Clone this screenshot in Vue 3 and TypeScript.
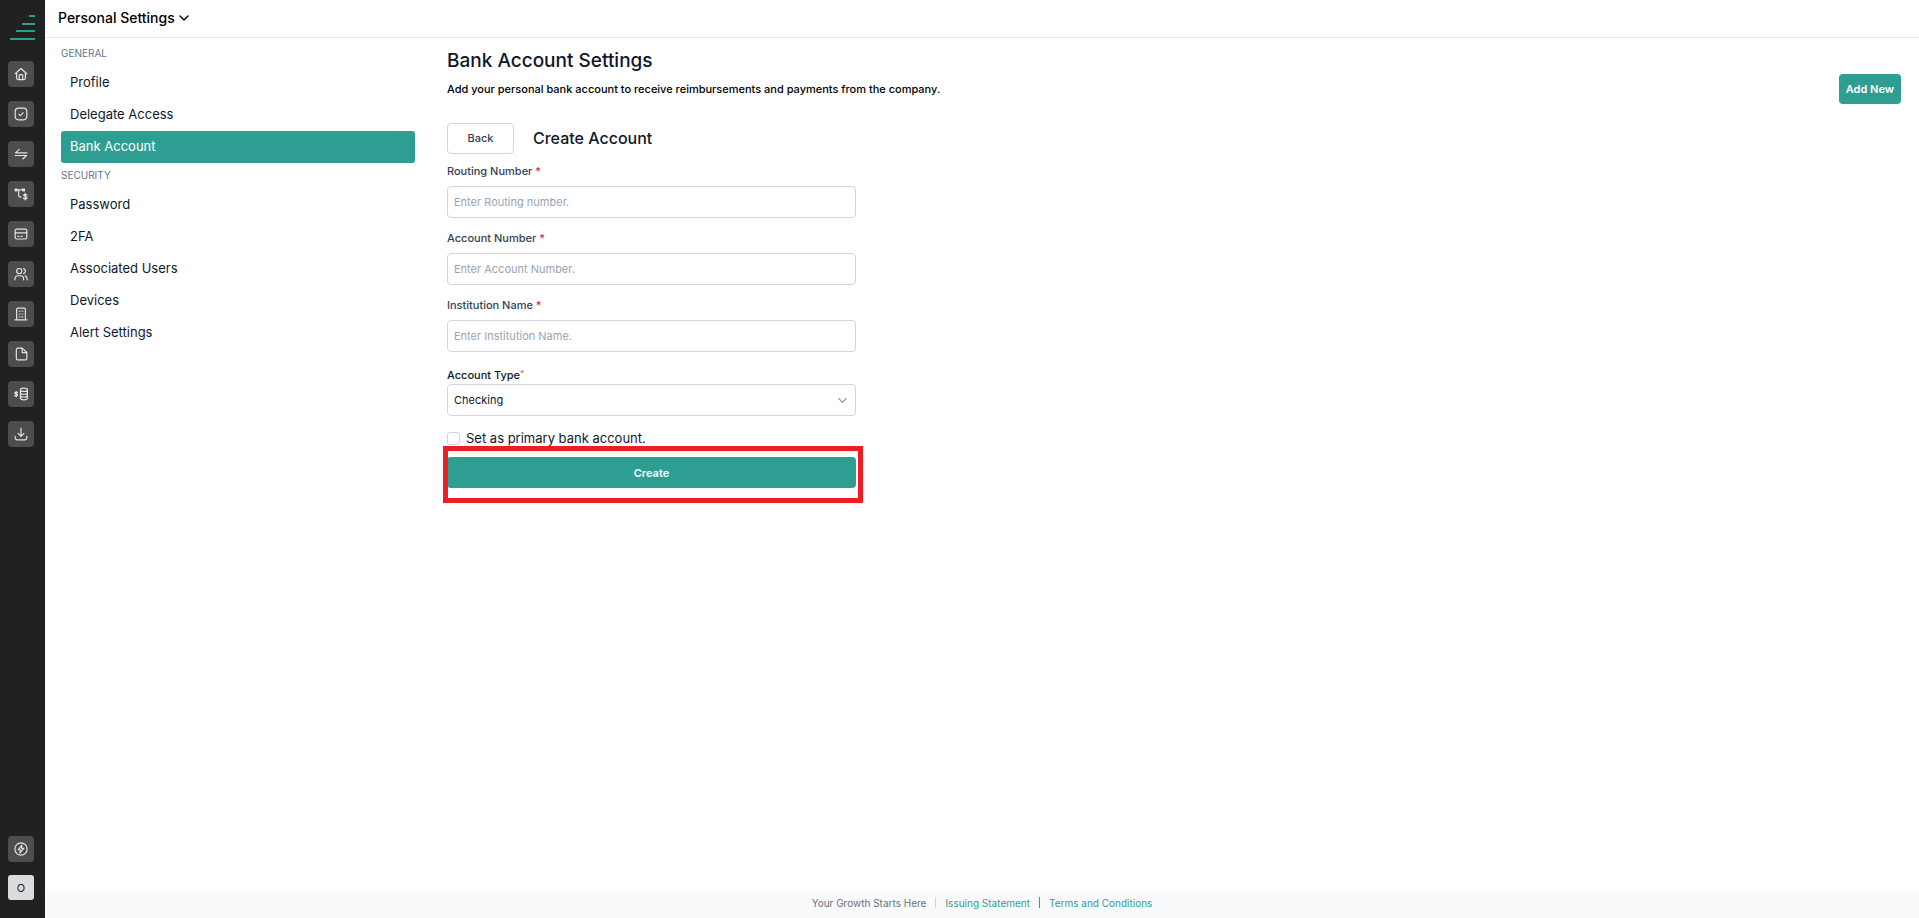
<script setup lang="ts">
import { ref } from 'vue'

interface Shape { d: string; fill?: boolean }
interface RailItem { name: string; shapes: Shape[] }
interface NavSection { title: string; items: string[] }
interface Field { id: string; label: string; placeholder: string }

const rail: RailItem[] = [
  { name: 'Home', shapes: [
    { d: 'M2 11.500 12 2.500l10 9' },
    { d: 'M4.500 9.800V19a2.500 2.500 0 0 0 2.500 2.500h10a2.500 2.500 0 0 0 2.500-2.500V9.800' },
    { d: 'M9 21v-6.500a1.500 1.500 0 0 1 1.500-1.500h3a1.500 1.500 0 0 1 1.500 1.500V21' },
  ] },
  { name: 'Approvals', shapes: [
    { d: 'M8 2h8a6 6 0 0 1 6 6v8a6 6 0 0 1-6 6H8a6 6 0 0 1-6-6V8a6 6 0 0 1 6-6z' },
    { d: 'M8.500 12.500l2.500 2.300 4.700-5' },
  ] },
  { name: 'Transfers', shapes: [
    { d: 'M22 10H2.500l6.500-6' },
    { d: 'M2 14.500h19.500l-6.500 6' },
  ] },
  { name: 'Workflows', shapes: [
    { d: 'M3 5h13M8 5v10a2 2 0 0 0 2 2h2' },
    { d: 'M2 3.500h3v3H2zM15 3.500h3v3h-3z', fill: true },
    { d: 'M22 13.300c-1-1.200-5.500-1.500-5.500 1 0 2.600 6 1.500 6 4 0 2.700-5.300 2.500-6.500.9M19.300 11v11' },
  ] },
  { name: 'Cards', shapes: [
    { d: 'M5 3.500h14a3 3 0 0 1 3 3v11a3 3 0 0 1-3 3H5a3 3 0 0 1-3-3v-11a3 3 0 0 1 3-3z' },
    { d: 'M2 10h20M6.500 16h2M12 16h2' },
  ] },
  { name: 'Users', shapes: [
    { d: 'M9 2.500a4.500 4.500 0 1 1 0 9 4.500 4.500 0 0 1 0-9z' },
    { d: 'M1.500 22v-2a5 5 0 0 1 5-5h5a5 5 0 0 1 5 5v2M16.500 2.800a4.500 4.500 0 0 1 0 8.500M19 15.300a5 5 0 0 1 3.500 4.700v2' },
  ] },
  { name: 'Company', shapes: [
    { d: 'M1.500 22h21M4.500 22V4a2 2 0 0 1 2-2h11a2 2 0 0 1 2 2v18' },
    { d: 'M8.800 7h.4M14.800 7h.4M8.800 12h.4M14.800 12h.4M8.800 17h.4M14.800 17h.4M12 7h.100M12 12h.100M12 17h.100' },
  ] },
  { name: 'Documents', shapes: [
    { d: 'M14 2H6.500A2.500 2.500 0 0 0 4 4.500v15A2.500 2.500 0 0 0 6.500 22h13a2.500 2.500 0 0 0 2.500-2.500V9.500z' },
    { d: 'M14 2v7.500h7.500' },
  ] },
  { name: 'Payments', shapes: [
    { d: 'M6 9.500c-1-1-4.600-1.200-4.600.8 0 2.200 4.800 1.200 4.800 3.400 0 2.200-4 2-5 .6M3.800 7.500v9' },
    { d: 'M11 5c0-4 12-4 12 0v14c0 4-12 4-12 0zM11 5c0 3.500 12 3.500 12 0M11 9.800c0 3.500 12 3.500 12 0M11 14.500c0 3.500 12 3.500 12 0' },
  ] },
  { name: 'Downloads', shapes: [
    { d: 'M12 2v13.500M7 11l5 5 5-5' },
    { d: 'M2 16v2.500A3.500 3.500 0 0 0 5.500 22h13a3.500 3.500 0 0 0 3.500-3.500V16' },
  ] },
]

const sections: NavSection[] = [
  { title: 'GENERAL', items: ['Profile', 'Delegate Access', 'Bank Account'] },
  { title: 'SECURITY', items: ['Password', '2FA', 'Associated Users', 'Devices', 'Alert Settings'] },
]
const active = ref('Bank Account')

const fields: Field[] = [
  { id: 'routing', label: 'Routing Number', placeholder: 'Enter Routing number.' },
  { id: 'account', label: 'Account Number', placeholder: 'Enter Account Number.' },
  { id: 'institution', label: 'Institution Name', placeholder: 'Enter Institution Name.' },
]
const values = ref<Record<string, string>>({ routing: '', account: '', institution: '' })
const accountType = ref('Checking')
const primary = ref(false)
</script>

<template>
  <div class="page">
    <aside class="rail">
      <svg class="logo" viewBox="0 0 25 25" aria-hidden="true">
        <path d="M19 0h6v2h-6zM12 8h13v2H12zM6 15h19v2H6zM0 23h25v2H0z" />
      </svg>
      <nav class="rail-nav" aria-label="Main">
        <a v-for="item in rail" :key="item.name" class="rail-btn" href="#" :aria-label="item.name">
          <svg class="rail-icon" viewBox="0 0 24 24" aria-hidden="true">
            <path v-for="s in item.shapes" :key="s.d" :d="s.d" :class="{ solid: s.fill }" />
          </svg>
        </a>
      </nav>
      <div class="rail-foot">
        <a class="rail-btn" href="#" aria-label="Quick actions">
          <svg class="bolt-icon" viewBox="0 0 24 24" aria-hidden="true">
            <circle cx="12" cy="12" r="10.500" />
            <path d="M13.500 5.500 7 13.300h4l-.8 5.200L17 10.700h-4.200z" />
          </svg>
        </a>
        <button class="avatar" type="button">O</button>
      </div>
    </aside>

    <div class="body">
      <header class="topbar">
        <button class="switcher" type="button">
          Personal Settings
          <svg class="chev" viewBox="0 0 10 10" aria-hidden="true"><path d="M1 3l4 4 4-4" /></svg>
        </button>
      </header>

      <div class="columns">
        <nav class="side" aria-label="Settings">
          <section v-for="s in sections" :key="s.title">
            <h2 class="side-title">{{ s.title }}</h2>
            <a
              v-for="i in s.items" :key="i" href="#" class="side-link"
              :class="{ active: i === active }" @click.prevent="active = i"
            >{{ i }}</a>
          </section>
        </nav>

        <main class="main">
          <div class="head">
            <div class="head-text">
              <h1>Bank Account Settings</h1>
              <p>Add your personal bank account to receive reimbursements and payments from the company.</p>
            </div>
            <button class="primary add" type="button">Add New</button>
          </div>

          <form class="form" @submit.prevent>
            <div class="form-head">
              <button class="back" type="button">Back</button>
              <h2>Create Account</h2>
            </div>

            <div v-for="f in fields" :key="f.id" class="field">
              <label :for="f.id">{{ f.label }} <span class="req">*</span></label>
              <input :id="f.id" v-model="values[f.id]" class="control" type="text" :placeholder="f.placeholder">
            </div>

            <div class="type-field">
              <label for="type">Account Type<span class="req">*</span></label>
              <div class="select-box">
                <select id="type" v-model="accountType" class="control">
                  <option>Checking</option>
                  <option>Savings</option>
                </select>
                <svg class="select-chev" viewBox="0 0 10 10" aria-hidden="true"><path d="M1 3l4 4 4-4" /></svg>
              </div>
            </div>

            <label class="check">
              <input v-model="primary" type="checkbox">
              Set as primary bank account.
            </label>

            <div class="submit">
              <button class="primary create" type="submit">Create</button>
              <span class="highlight" aria-hidden="true"></span>
            </div>
          </form>
        </main>
      </div>

      <footer class="footer">
        <span>Your Growth Starts Here</span>
        <i class="bar"></i>
        <a href="#">Issuing Statement</a>
        <i class="bar teal"></i>
        <a href="#">Terms and Conditions</a>
      </footer>
    </div>
  </div>
</template>

<style>
body { margin: 0; background: #fff; }
</style>

<style scoped>
.page, .page * { box-sizing: border-box; }
.page {
  display: flex;
  min-height: 100vh;
  font: 400 13px/16px "Inter", "Liberation Sans", sans-serif;
  color: #0f172a;
}
h1, h2, p { margin: 0; }
a { text-decoration: none; color: inherit; }
button, input, select { font: inherit; color: inherit; margin: 0; }
button { cursor: pointer; }

.rail {
  flex: none;
  display: flex;
  flex-direction: column;
  width: 45px;
  padding: 15px 0 18px 8px;
  background: #212121;
}
.logo { width: 25px; height: 25px; margin: 0 0 21px 2px; fill: #2f9e92; }
.rail-nav { display: flex; flex-direction: column; gap: 14px; }
.rail-btn {
  display: flex;
  align-items: center;
  justify-content: center;
  width: 26px;
  height: 26px;
  border-radius: 4px;
  background: #4d4d4d;
}
.rail-icon, .bolt-icon {
  width: 14px;
  height: 14px;
  fill: none;
  stroke: #e4e4e4;
  stroke-width: 2;
  stroke-linecap: round;
  stroke-linejoin: round;
}
.rail-icon .solid { fill: #e4e4e4; }
.rail-foot { display: flex; flex-direction: column; gap: 13px; margin-top: auto; }
.avatar {
  width: 26px;
  height: 25px;
  padding: 0;
  border: 0;
  border-radius: 3px;
  background: #dcdcdc;
  color: #222;
  font-size: 11px;
}

.body { flex: 1; min-width: 0; display: flex; flex-direction: column; }
.topbar {
  display: flex;
  align-items: center;
  height: 38px;
  padding: 0 13px 2px;
  border-bottom: 1px solid #e2e8f0;
}
.switcher {
  display: flex;
  align-items: center;
  gap: 4px;
  padding: 0;
  border: 0;
  background: none;
  color: #000;
  font-size: 14px;
  font-weight: 500;
  line-height: 20px;
}
.chev, .select-chev { width: 10px; height: 10px; fill: none; stroke: currentColor; stroke-linecap: round; stroke-linejoin: round; }
.chev { stroke-width: 1.4; }

.columns { flex: 1; display: flex; gap: 32px; padding: 0 18px 0 16px; }
.side { flex: none; width: 354px; padding-top: 3px; }
.side-title { padding-bottom: 2px; font-size: 10px; font-weight: 400; line-height: 24px; color: #64748b; }
.side-link { display: block; padding: 0 9px 2px; line-height: 30px; border-radius: 3px; }
.side-link.active { background: #2f9e92; color: #fff; }

.main { flex: 1; min-width: 0; padding-top: 9px; }
.head { display: flex; justify-content: space-between; align-items: flex-end; }
.head-text { padding-bottom: 7px; }
.head h1 { font-size: 19px; font-weight: 500; line-height: 28px; }
.head p { margin-top: 6px; font-size: 11px; font-weight: 500; color: #000; }

.primary { border: 0; border-radius: 4px; background: #2f9e92; color: #fff; font-size: 11px; font-weight: 600; }
.add { flex: none; height: 30px; padding: 0 7px; }

.form { width: 100%; max-width: 409px; margin-top: 19px; font-size: 11px; }
.form-head { display: flex; align-items: center; gap: 19px; margin-bottom: 9px; }
.form-head h2 { padding-bottom: 1px; font-size: 16px; font-weight: 500; line-height: 20px; }
.back {
  width: 67px;
  height: 31px;
  padding: 0 0 1px;
  border: 1px solid #d1d5db;
  border-radius: 4px;
  background: #fff;
  color: #374151;
  font-weight: 500;
}
.field { display: flex; flex-direction: column; gap: 7px; margin-bottom: 12px; font-weight: 500; color: #374151; }
.req { color: #dc2626; }
.control {
  width: 100%;
  height: 32px;
  padding: 0 6px;
  border: 1px solid #d1d5db;
  border-radius: 4px;
  background: #fff;
  color: #0f172a;
  font-weight: 400;
  outline: none;
}
.control::placeholder { color: #9ca3af; opacity: 1; }
.type-field { display: flex; flex-direction: column; gap: 1px; padding-top: 3px; font-weight: 500; }
.type-field .req { font-size: 8px; line-height: 12px; vertical-align: top; color: #ef4444; }
.select-box { display: grid; align-items: center; }
.select-box > * { grid-area: 1 / 1; }
.select-box .control { appearance: none; }
.select-chev { width: 9px; height: 9px; justify-self: end; margin-right: 9px; color: #888e99; stroke-width: 1.3; pointer-events: none; }
.check { display: flex; align-items: center; gap: 6px; margin-top: 14px; font-size: 13px; }
.check input {
  appearance: none;
  width: 13px;
  height: 13px;
  border: 1px solid #d1d5db;
  border-radius: 3px;
  background: #fff;
}
.check input:checked { background: #2f9e92; }
.submit { position: relative; margin-top: 11px; }
.create { display: block; width: 100%; height: 31px; }
.highlight { position: absolute; inset: -11px -7px -15px -4px; border: 5px solid #ee1c25; pointer-events: none; }

.footer {
  display: flex;
  align-items: center;
  justify-content: center;
  gap: 9px;
  height: 29px;
  padding-bottom: 2px;
  background: #f8fafc;
  color: #6b7280;
  font-size: 10px;
}
.footer a { color: #2f9e92; }
.bar { width: 1px; height: 11px; background: #d1d5db; }
.bar.teal { background: #2f9e92; }
</style>
